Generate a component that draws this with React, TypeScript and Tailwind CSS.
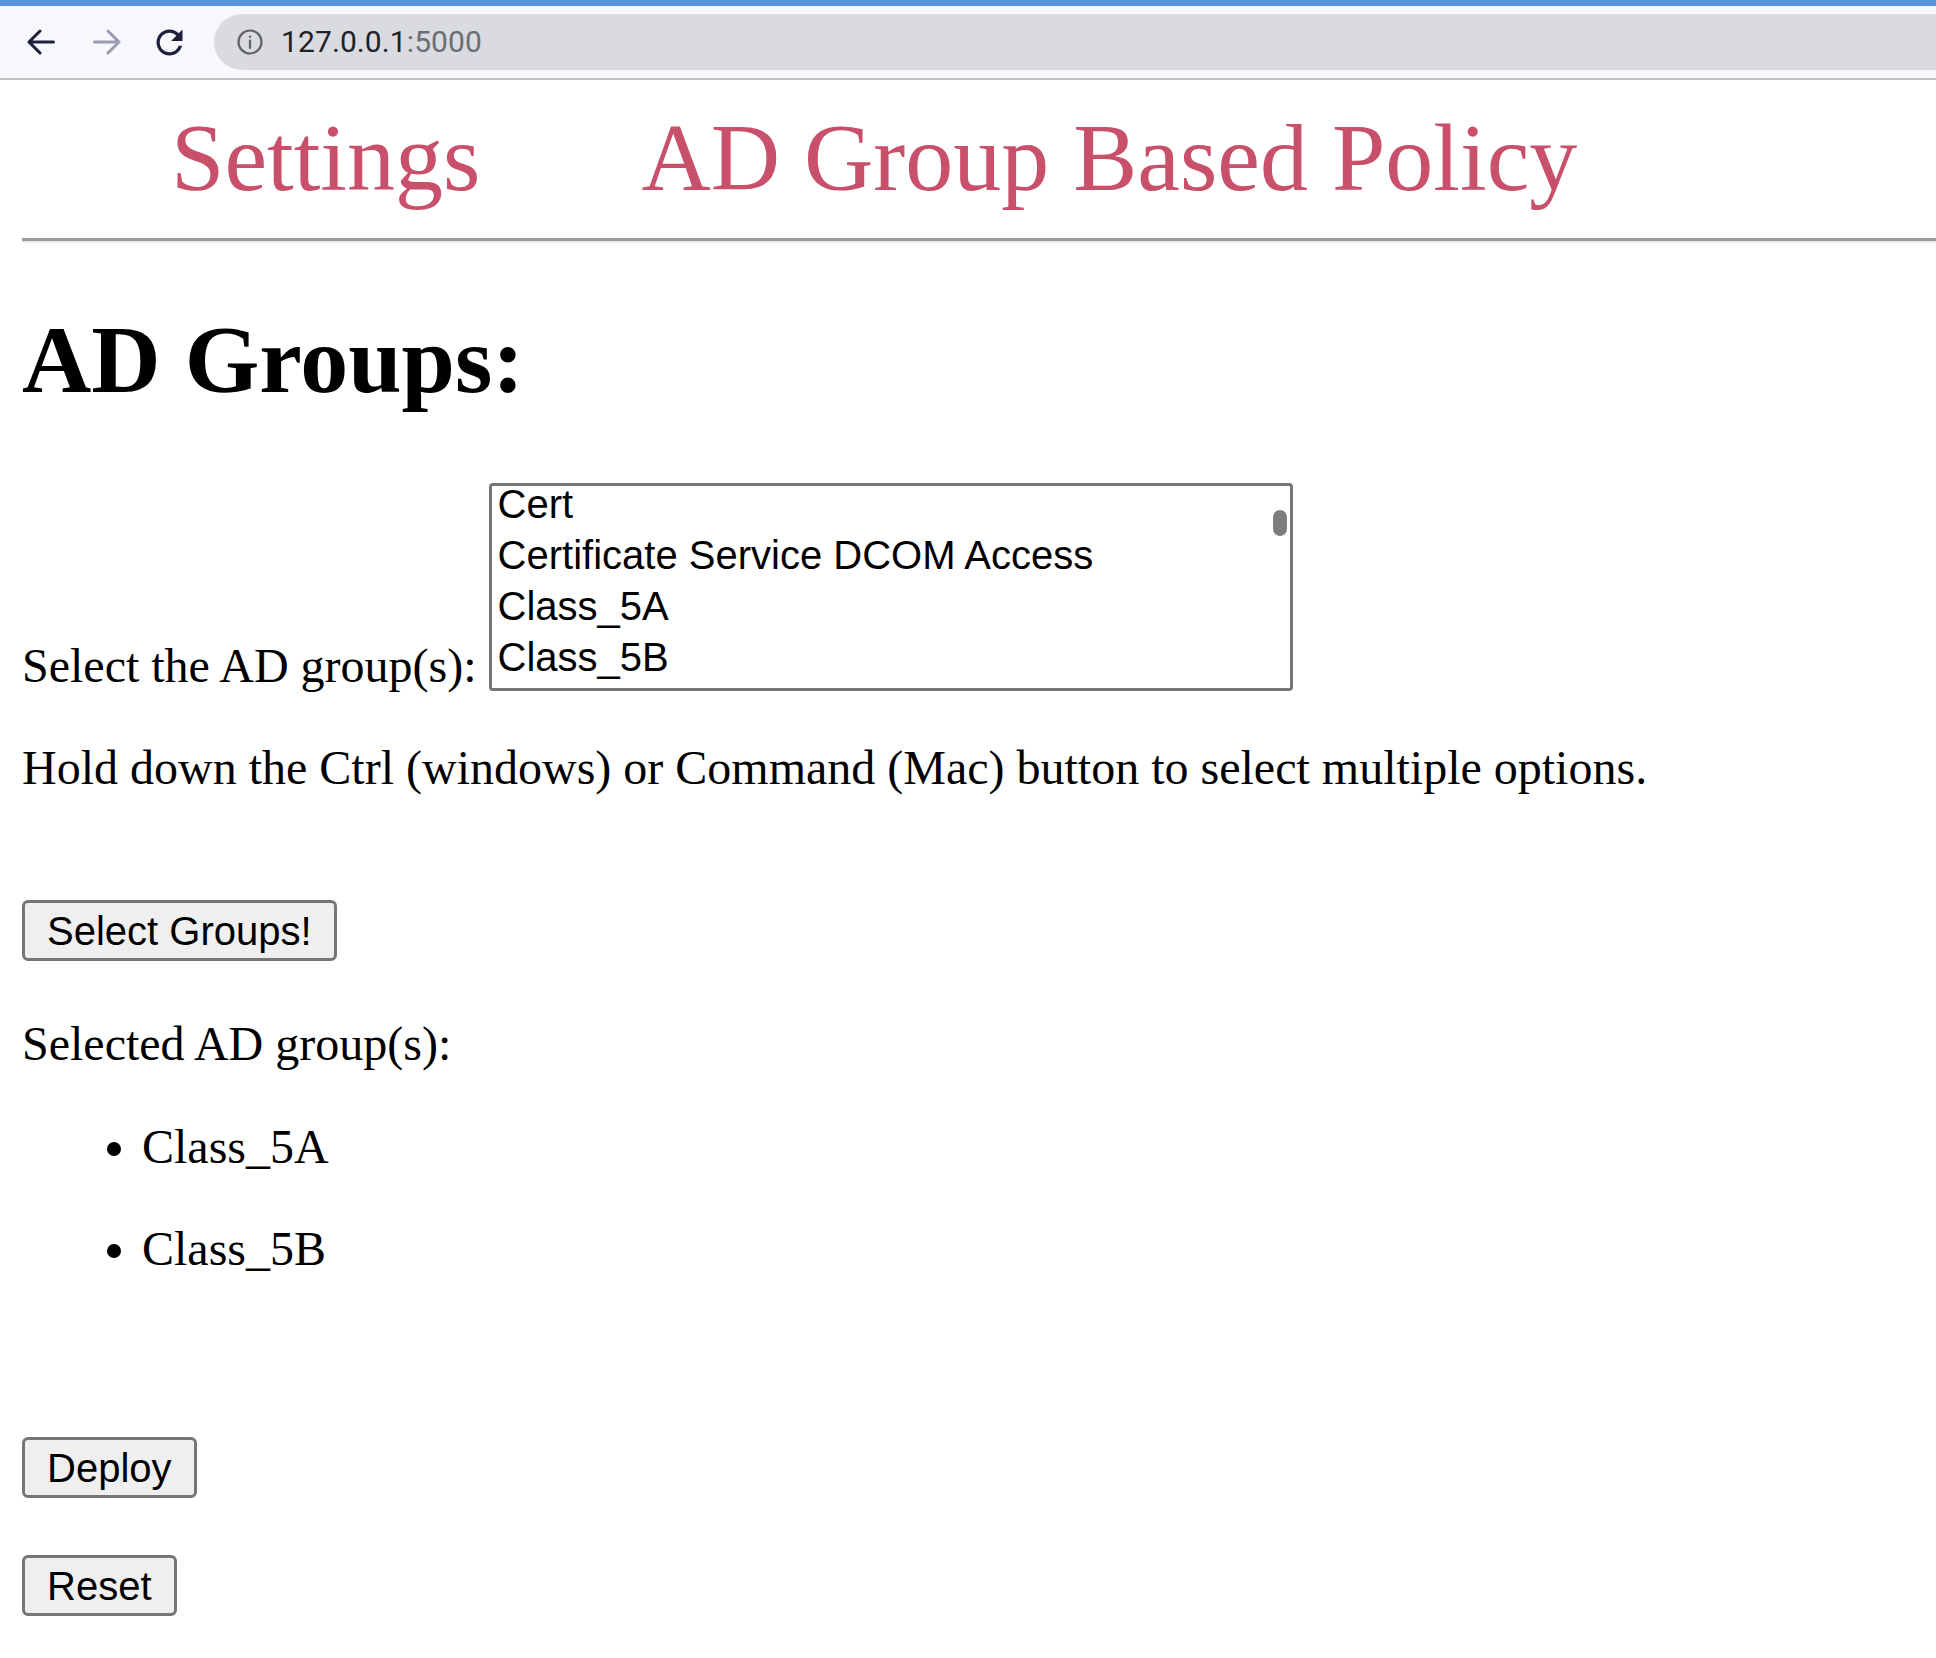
import React from "react";

const OPTIONS = ["Cert", "Certificate Service DCOM Access", "Class_5A", "Class_5B"];
const SELECTED = ["Class_5A", "Class_5B"];

function ArrowIcon({ dir, color }: { dir: "left" | "right"; color: string }) {
  return (
    <svg width="28" height="28" viewBox="0 0 28 28" fill="none" stroke={color} strokeWidth="3" strokeLinecap="round" strokeLinejoin="round">
      {dir === "left" ? (
        <path d="M26.5 14H2 M13 3L2 14l11 11" />
      ) : (
        <path d="M1.5 14H26 M15 3l11 11-11 11" />
      )}
    </svg>
  );
}

function BrowserBar() {
  return (
    <div className="w-full">
      <div className="h-[6px] bg-[#5a93de]" />
      <div className="h-[74px] bg-[#f7f8fc] border-b-2 border-[#c2c3cb] flex items-center pl-[27px]">
        <ArrowIcon dir="left" color="#1f1f3d" />
        <div className="ml-[38px]">
          <ArrowIcon dir="right" color="#9c9cb4" />
        </div>
        <svg className="ml-[29px]" width="39" height="39" viewBox="0 0 24 24" fill="#1f1f3d">
          <path d="M17.65 6.35C16.2 4.9 14.21 4 12 4c-4.42 0-7.99 3.58-7.99 8s3.57 8 7.99 8c3.730 0 6.84-2.55 7.73-6h-2.08c-.82 2.33-3.04 4-5.65 4-3.31 0-6-2.690-6-6s2.69-6 6-6c1.66 0 3.14.69 4.22 1.78L13 11h7V4l-2.35 2.35z" />
        </svg>
        <div className="ml-[25px] flex-1 h-[56px] bg-[#dadbe0] rounded-l-full flex items-center pl-[23px]">
          <svg width="26" height="26" viewBox="0 0 26 26" fill="none" stroke="#606368" strokeWidth="2.2">
            <circle cx="13" cy="13" r="11.5" />
            <path d="M13 11.5V19" strokeLinecap="round" />
            <circle cx="13" cy="7.8" r="1.2" fill="#606368" stroke="none" />
          </svg>
          <span className="ml-[18px] font-['Roboto',sans-serif] text-[30px] leading-none tracking-[0.1px]">
            <span className="text-[#202124]">127.0.0.1</span>
            <span className="text-[#6b6e73]">:5000</span>
          </span>
        </div>
      </div>
    </div>
  );
}

function Btn({ children }: { children: React.ReactNode }) {
  return (
    <button className="inline-flex items-center h-[61px] px-[22px] border-[3px] border-[#767676] rounded-[6px] bg-[#efefef] font-['Liberation_Sans',Arial,sans-serif] text-[40px] text-black">
      {children}
    </button>
  );
}

export default function App() {
  return (
    <div className="min-h-[1658px] bg-white text-black font-['Liberation_Serif','Times_New_Roman',serif]">
      <BrowserBar />

      <div className="pl-[22px]">
        {/* top nav */}
        <nav className="mt-[23px] flex ml-[149px] gap-[161px] text-[96px] leading-[110px] text-[#c9506b]">
          <span>Settings</span>
          <span>AD Group Based Policy</span>
        </nav>

        <div className="mt-[25px] border-t-[3px] border-t-[#9b9b9b] border-b-[2px] border-b-[#e9e9e9]" />

        <h1 className="mt-[62px] text-[96px] leading-[110px] font-bold">AD Groups:</h1>

        <div className="mt-[68px] flex items-end">
          <label className="text-[48px] leading-[55px] mb-[-2px]">Select the AD group(s):</label>
          {/* listbox, scrolled a few px down like the original */}
          <div className="ml-[12px] relative w-[804px] h-[208px] border-[3px] border-[#767676] rounded-[4px] overflow-hidden bg-white">
            <div className="-mt-[7px] font-['Liberation_Sans',Arial,sans-serif] text-[40px]">
              {OPTIONS.map((o) => (
                <div key={o} className="h-[51px] leading-[51px] pl-[6px] whitespace-nowrap">
                  {o}
                </div>
              ))}
            </div>
            <div className="absolute right-[3px] top-[24px] w-[14px] h-[26px] rounded-full bg-[#7e7e7e]" />
          </div>
        </div>

        <p className="mt-[49px] text-[48px] leading-[55px]">
          Hold down the Ctrl (windows) or Command (Mac) button to select multiple options.
        </p>

        <div className="mt-[105px]">
          <Btn>Select Groups!</Btn>
        </div>

        <p className="mt-[55px] text-[48px] leading-[55px]">Selected AD group(s):</p>

        <ul className="list-disc pl-[120px] text-[48px] leading-[55px]">
          {SELECTED.map((g, i) => (
            <li key={g} className={i === 0 ? "mt-[48px]" : "mt-[47px]"}>
              {g}
            </li>
          ))}
        </ul>

        <div className="mt-[161px]">
          <Btn>Deploy</Btn>
        </div>
        <div className="mt-[57px]">
          <Btn>Reset</Btn>
        </div>
      </div>
    </div>
  );
}
